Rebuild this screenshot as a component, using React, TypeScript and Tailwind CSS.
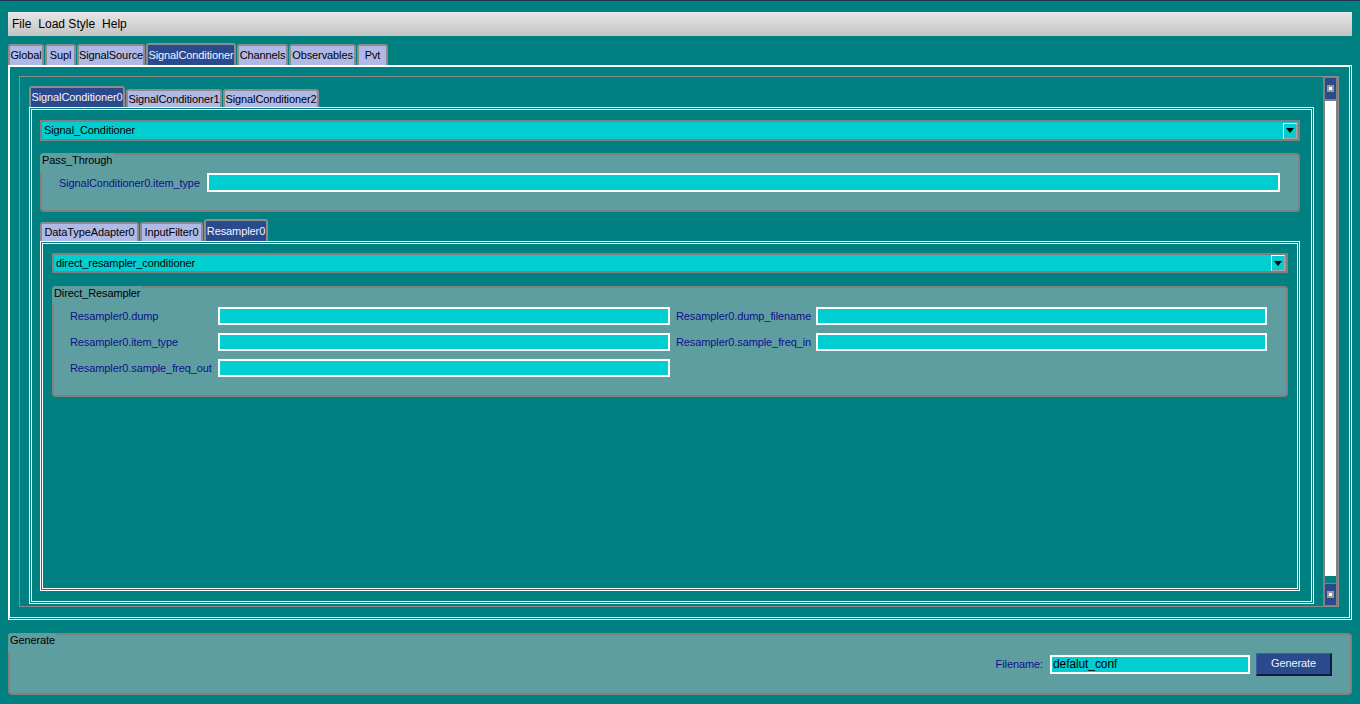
import type { ReactNode } from "react";

type TabDef = { label: string; w: string; active?: boolean };

const topTabs: TabDef[] = [
  { label: "Global", w: "w-[36px]" },
  { label: "Supl", w: "w-[31px]" },
  { label: "SignalSource", w: "w-[68px]" },
  { label: "SignalConditioner", w: "w-[90px]", active: true },
  { label: "Channels", w: "w-[51px]" },
  { label: "Observables", w: "w-[67px]" },
  { label: "Pvt", w: "w-[31px]" },
];

const condTabs: TabDef[] = [
  { label: "SignalConditioner0", w: "w-[96px]", active: true },
  { label: "SignalConditioner1", w: "w-[96px]" },
  { label: "SignalConditioner2", w: "w-[96px]" },
];

const blockTabs: TabDef[] = [
  { label: "DataTypeAdapter0", w: "w-[99px]" },
  { label: "InputFilter0", w: "w-[63px]" },
  { label: "Resampler0", w: "w-[64px]", active: true },
];

function TabRow({ tabs, rowH, activeH, idleH }: { tabs: TabDef[]; rowH: string; activeH: string; idleH: string }) {
  return (
    <div className={`flex items-end gap-[1px] ${rowH}`}>
      {tabs.map((t) => (
        <div
          key={t.label}
          className={`${t.w} ${t.active ? `${activeH} bg-[#2b4a8e] text-[#f2f4ff]` : `${idleH} bg-[#b0b9e6] text-black`} flex shrink-0 items-center justify-center whitespace-nowrap rounded-t-[3px] border-2 border-b-0 border-[#8c8c8c] leading-none`}
        >
          {t.label}
        </div>
      ))}
    </div>
  );
}

function Group({ title, className, children }: { title: string; className: string; children: ReactNode }) {
  return (
    <div className={`relative rounded-[4px] border-2 border-[#808080] bg-[#5f9ea0] ${className}`}>
      <div className="absolute -left-[2px] -top-[2px] h-[19px] rounded-tl-[4px] bg-[#5f9ea0] px-[2px] leading-[15px] text-black">
        {title}
      </div>
      {children}
    </div>
  );
}

function Combo({ value, className }: { value: string; className: string }) {
  return (
    <div className={`flex items-center border-2 border-[#808080] bg-[#00ced1] pl-[2px] text-black ${className}`}>
      <span className="flex-1">{value}</span>
      <div className="mr-[1px] flex h-[16px] w-[14px] items-center justify-center border border-white border-b-[#a8a8a8] border-r-[#a8a8a8]">
        <svg width="8" height="5" viewBox="0 0 8 5">
          <polygon points="0,0 8,0 4,5" fill="#000" />
        </svg>
      </div>
    </div>
  );
}

function Field({ className }: { className: string }) {
  return <div className={`border-2 border-white bg-[#00ced1] ${className}`} />;
}

function ScrollButton() {
  return (
    <div className="flex h-[21px] items-center justify-center bg-[#2b4a8e]">
      <div className="flex h-[7px] w-[7px] items-center justify-center bg-[#9a9a9a]">
        <div className="h-[3px] w-[3px] bg-white" />
      </div>
    </div>
  );
}

const label = "text-[#10108c] whitespace-nowrap";

export default function App() {
  return (
    <div className="h-[704px] w-[1360px] overflow-hidden border-t border-[#1b3553] bg-[#008080] font-['Liberation_Sans',Arial,sans-serif] text-[11px] tracking-[-0.1px]">
      {/* menu bar */}
      <div className="mx-[8px] mt-[11px] flex h-[24px] items-center gap-[7px] bg-gradient-to-b from-[#e6e6e6] to-[#c4c4c4] pl-[4px] text-[12px] tracking-normal text-black">
        <span>File</span>
        <span>Load Style</span>
        <span>Help</span>
      </div>

      {/* top level tabs */}
      <div className="mx-[8px] mt-[7px]">
        <TabRow tabs={topTabs} rowH="h-[22px]" activeH="h-[22px]" idleH="h-[21px]" />
        <div className="h-[555px] w-[1344px] border-[3px] border-l-2 border-t-2 border-double border-white p-[6px] pl-[9px] pt-[9px]">
          {/* scroll area */}
          <div className="flex h-[531px] w-[1320px] border border-[#8a8a8a]">
            <div className="flex-1 overflow-hidden pl-[9px] pt-[10px]">
              <TabRow tabs={condTabs} rowH="h-[20px]" activeH="h-[21px]" idleH="h-[18px]" />
              <div className="h-[497px] w-[1285px] border-[3px] border-double border-white pl-[8px] pt-[10px]">
                <Combo value="Signal_Conditioner" className="h-[21px] w-[1260px]" />

                <Group title="Pass_Through" className="mt-[12px] h-[59px] w-[1260px]">
                  <div className="flex items-center pl-[17px] pt-[18px]">
                    <span className={`${label} w-[148px] pt-[2px]`}>SignalConditioner0.item_type</span>
                    <Field className="h-[19px] w-[1073px]" />
                  </div>
                </Group>

                <div className="mt-[8px]">
                  <TabRow tabs={blockTabs} rowH="h-[21px]" activeH="h-[22px]" idleH="h-[19px]" />
                  <div className="h-[350px] w-[1260px] border-[3px] border-double border-white pl-[9px] pt-[9px]">
                    <Combo value="direct_resampler_conditioner" className="h-[20px] w-[1236px]" />

                    <Group title="Direct_Resampler" className="mt-[13px] h-[111px] w-[1236px]">
                      <div className="grid grid-cols-[148px_452px_146px_451px] items-center gap-y-[8px] pl-[16px] pt-[19px]">
                        <span className={`${label} pt-[1px]`}>Resampler0.dump</span>
                        <Field className="h-[18px]" />
                        <span className={`${label} pl-[6px] pt-[1px]`}>Resampler0.dump_filename</span>
                        <Field className="h-[18px]" />

                        <span className={`${label} pt-[1px]`}>Resampler0.item_type</span>
                        <Field className="h-[18px]" />
                        <span className={`${label} pl-[6px] pt-[1px]`}>Resampler0.sample_freq_in</span>
                        <Field className="h-[18px]" />

                        <span className={`${label} pt-[1px]`}>Resampler0.sample_freq_out</span>
                        <Field className="h-[18px]" />
                      </div>
                    </Group>
                  </div>
                </div>
              </div>
            </div>

            {/* vertical scrollbar */}
            <div className="flex w-[15px] flex-col bg-[#808080] px-[2px] py-[1px]">
              <ScrollButton />
              <div className="mb-[1px] mt-[2px] flex-1 bg-[#008080]">
                <div className="h-[475px] bg-white" />
              </div>
              <ScrollButton />
            </div>
          </div>
        </div>
      </div>

      {/* generate box */}
      <Group title="Generate" className="mx-[8px] mt-[13px] h-[62px] w-[1344px]">
        <div className="flex h-full items-center justify-end pr-[18px]">
          <span className={`${label} mr-[7px]`}>Filename:</span>
          <div className="flex h-[19px] w-[200px] items-center border-2 border-white bg-[#00ced1] pl-[1px] text-[12px] text-black">
            defalut_conf
          </div>
          <button className="ml-[6px] h-[23px] w-[76px] border border-[#3d5fa8] border-b-2 border-r-2 border-b-[#0e1d3d] border-r-[#0e1d3d] bg-[#2b4a8e] text-[11px] text-[#eef2ff]">
            Generate
          </button>
        </div>
      </Group>
    </div>
  );
}
